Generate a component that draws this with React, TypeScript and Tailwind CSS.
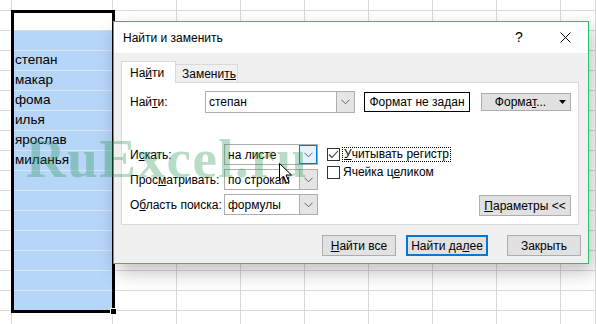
import React from 'react';

const cols = [12, 101, 64, 64, 64, 64, 64, 64, 64, 35];
const names = ['', '', '', 'степан', 'макар', 'фома', 'илья', 'ярослав', 'миланья', '', '', '', '', '', '', '', ''];

function Chevron({ className = 'text-[#606060]' }: { className?: string }) {
  return (
    <svg width="9" height="6" viewBox="0 0 9 6" className={className}>
      <polyline points="0.5,0.8 4.5,4.8 8.5,0.8" fill="none" stroke="currentColor" strokeWidth="1" />
    </svg>
  );
}

function Combo({ value, active }: { value: string; active?: boolean }) {
  return (
    <div className="flex h-[21px] w-[94px] border border-[#adadad] bg-white">
      <div className="flex flex-1 items-center pl-[3px] text-[12px] text-black">{value}</div>
      <div
        className={
          active
            ? 'flex w-[18px] items-center justify-center border border-[#0078d7] bg-[#e5f1fb]'
            : 'flex w-[18px] items-center justify-center border-l border-[#adadad] bg-[#e5e5e5]'
        }
      >
        <Chevron />
      </div>
    </div>
  );
}

function Btn({ children, w, primary }: { children: React.ReactNode; w: string; primary?: boolean }) {
  return (
    <div
      className={`flex h-[21px] items-center justify-center bg-[#e1e1e1] text-[12px] text-black ${w} ${
        primary ? 'border-2 border-[#0078d7]' : 'border border-[#adadad]'
      }`}
    >
      {children}
    </div>
  );
}

function Check({ checked }: { checked?: boolean }) {
  return (
    <div className="flex h-[13px] w-[13px] items-center justify-center border border-[#333] bg-white">
      {checked && (
        <svg width="11" height="9" viewBox="0 0 11 9">
          <polyline points="1,4.5 4,7.5 10,1" fill="none" stroke="#333" strokeWidth="1.1" />
        </svg>
      )}
    </div>
  );
}

export default function App() {
  return (
    <div className="relative h-[324px] w-[596px] overflow-hidden bg-white font-['Liberation_Sans',Arial,sans-serif]">
      {/* sheet */}
      <div className="grid grid-cols-[12px_101px_64px_64px_64px_64px_64px_64px_64px_35px] grid-rows-[11px_repeat(16,20px)]">
        {Array.from({ length: 17 }).map((_, r) =>
          cols.map((_, c) => {
            const inSel = c === 1 && r >= 2 && r <= 15;
            return (
              <div
                key={`${r}-${c}`}
                className={
                  inSel
                    ? 'flex items-center border-b border-r border-b-[#d6e6f7] border-r-[#d4d4d4] bg-[#b6d6f8] pl-[3px] text-[13.5px] text-black'
                    : 'border-b border-r border-[#d9d9d9]'
                }
              >
                {inSel ? names[r] : null}
              </div>
            );
          })
        )}
      </div>

      {/* selection border */}
      <div className="absolute left-[11px] top-[10px] h-[303px] w-[104px] border-[3px] border-black" />
      <div className="absolute left-[110px] top-[308px] h-[7px] w-[7px] border border-white bg-black" />

      {/* dialog */}
      <div className="absolute left-[113px] top-[21px] flex h-[243px] w-[476px] flex-col border border-[#1fc46b] bg-[#f0f0f0] shadow-[4px_8px_18px_rgba(0,0,0,0.25)]">
        <div className="flex h-[31px] items-center bg-white">
          <span className="pl-[9px] text-[12px] text-black">Найти и заменить</span>
          <div className="ml-auto flex h-full">
            <div className="flex w-[46px] items-center justify-center text-[14px] text-black">?</div>
            <div className="flex w-[46px] items-center justify-center">
              <svg width="11" height="11" viewBox="0 0 11 11">
                <path d="M0.5 0.5 L10.5 10.5 M10.5 0.5 L0.5 10.5" stroke="#000" strokeWidth="1" />
              </svg>
            </div>
          </div>
        </div>

        <div className="flex flex-1 flex-col px-[7px] pt-[7px]">
          {/* tabs */}
          <div className="flex h-[22px] items-end">
            <div className="relative z-10 -mb-px flex h-[22px] w-[55px] items-center border border-b-0 border-[#d9d9d9] bg-white pl-[8px] text-[12px] text-black">
              На<span className="underline">й</span>ти
            </div>
            <div className="flex h-[18px] w-[62px] items-center border border-b-0 border-l-0 border-[#d9d9d9] bg-[#f0f0f0] pl-[6px] text-[12px] text-black">
              Замени<span className="underline">ть</span>
            </div>
          </div>

          {/* panel */}
          <div className="flex h-[143px] w-[458px] flex-col border border-[#d9d9d9] bg-white pl-[8px] pr-[7px] pt-[8px]">
            <div className="flex h-[22px] items-center">
              <div className="w-[75px] text-[12px] text-black">
                Най<span className="underline">т</span>и:
              </div>
              <div className="flex h-[22px] w-[150px] border border-[#adadad] bg-white">
                <div className="flex flex-1 items-center pl-[3px] text-[12px] text-black">степан</div>
                <div className="flex w-[18px] items-center justify-center border-l border-[#adadad] bg-[#e5e5e5]">
                  <Chevron />
                </div>
              </div>
              <div className="ml-[9px] flex h-[20px] w-[106px] items-center justify-center border border-black text-[12px] text-black">
                Формат не задан
              </div>
              <div className="ml-[11px] flex h-[18px] w-[90px] items-center border border-[#adadad] bg-[#e1e1e1] text-[12px] text-black">
                <span className="flex-1 text-center">
                  Форма<span className="underline">т</span>...
                </span>
                <svg width="7" height="4" viewBox="0 0 7 4" className="mr-[4px]">
                  <polygon points="0,0 7,0 3.5,4" fill="#000" />
                </svg>
              </div>
            </div>

            <div className="mt-[31px] flex">
              <div className="flex flex-col gap-[4px]">
                {[
                  { pre: 'И', u: 'с', post: 'кать:', v: 'на листе', active: true },
                  { pre: 'Прос', u: 'м', post: 'атривать:', v: 'по строкам' },
                  { pre: 'О', u: 'б', post: 'ласть поиска:', v: 'формулы' },
                ].map((row) => (
                  <div key={row.v} className="flex h-[21px] items-center">
                    <div className="w-[94px] text-[12px] text-black">
                      {row.pre}
                      <span className="underline">{row.u}</span>
                      {row.post}
                    </div>
                    <Combo value={row.v} active={row.active} />
                  </div>
                ))}
              </div>
              <div className="ml-[9px] flex flex-1 flex-col">
                <div className="mt-[2px] flex h-[16px] items-center gap-[2px]">
                  <Check checked />
                  <span className="border border-dotted border-black px-[1px] text-[12px] leading-[13px] text-black">
                    <span className="underline">У</span>читывать регистр
                  </span>
                </div>
                <div className="mt-[2px] flex h-[16px] items-center gap-[3px]">
                  <Check />
                  <span className="text-[12px] text-black">
                    Ячейка ц<span className="underline">е</span>ликом
                  </span>
                </div>
                <div className="mt-[15px] flex justify-end">
                  <div className="flex h-[21px] w-[92px] items-center justify-center border border-[#adadad] bg-[#e1e1e1] text-[12px] text-black">
                    <span className="underline">П</span>араметры &lt;&lt;
                  </div>
                </div>
              </div>
            </div>
          </div>

          {/* buttons */}
          <div className="mt-[10px] flex justify-end">
            <Btn w="w-[74px]">
              <span>
                <span className="underline">Н</span>айти все
              </span>
            </Btn>
            <div className="ml-[10px]">
              <Btn w="w-[82px]" primary>
                <span>
                  Найти да<span className="underline">л</span>ее
                </span>
              </Btn>
            </div>
            <div className="ml-[19px]">
              <Btn w="w-[74px]">Закрыть</Btn>
            </div>
          </div>
        </div>
      </div>

      {/* watermark */}
      <div className="pointer-events-none absolute left-[26px] top-[131px] font-['Liberation_Serif',serif] text-[55px] font-bold leading-none tracking-[1.5px] text-[rgba(40,150,80,0.33)]">
        RuExcel.ru
      </div>

      {/* mouse cursor */}
      <svg width="14" height="22" viewBox="0 0 14 22" className="pointer-events-none absolute left-[279px] top-[163px]">
        <path d="M0.5 0.5 L0.5 17 L4.5 13 L7.5 20 L10 19 L7 12 L12.5 12 Z" fill="#fff" stroke="#000" strokeWidth="1" />
      </svg>
    </div>
  );
}
